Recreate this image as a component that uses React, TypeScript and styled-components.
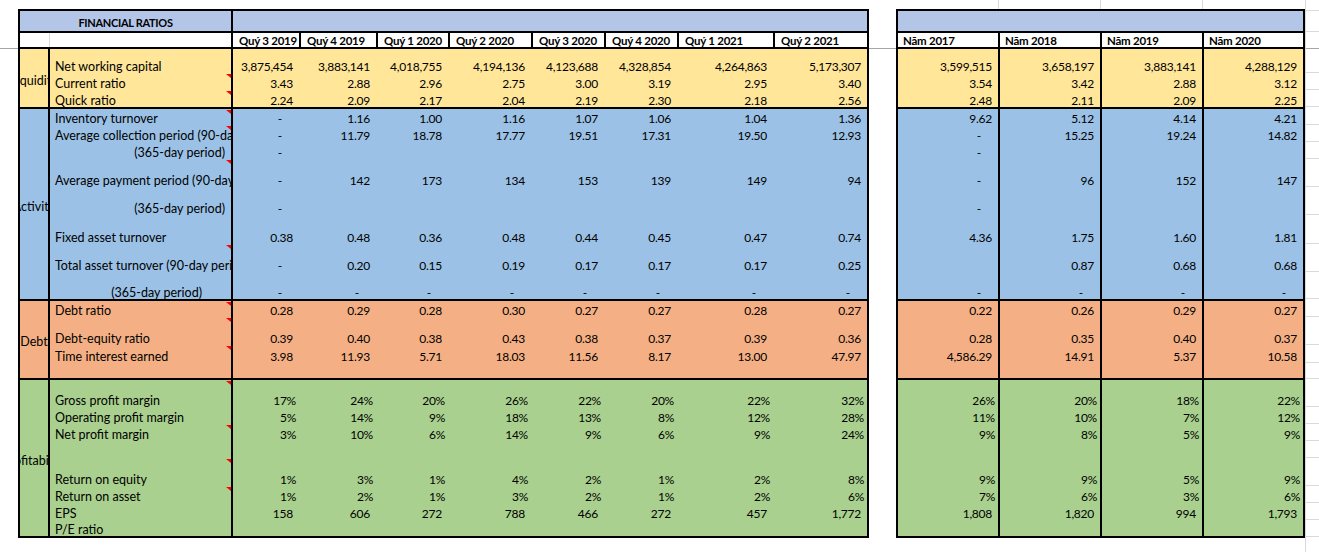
import React from 'react';
import styled, { createGlobalStyle } from 'styled-components';

const GlobalStyle = createGlobalStyle`
  html, body {
    margin: 0;
    padding: 0;
    background: #ffffff;
  }
  body {
    font-family: Lato, "Liberation Sans", sans-serif;
    font-size: 12.5px;
    color: #000000;
  }
`;

const INK = '#000000';
const GRID = '#d9d9d9';

// column widths (px), borders included
const CAT_W = 30;
const LABEL_W = 183;
const QUARTER_COLS = [66, 77, 72, 83, 73, 73, 96, 94];
const YEAR_COLS = [100, 102, 102, 101];

const px = (list: number[]) => list.map((w) => `${w}px`).join(' ');
const LEFT_COLS = px([CAT_W, LABEL_W, ...QUARTER_COLS]);
const RIGHT_COLS = px(YEAR_COLS);

// y of each sheet gridline seen in the right margin
const GRID_LINES = [10, 31, 72, 89, 106, 124, 141, 158, 186, 214, 243, 271, 298, 316, 344, 362, 378, 406, 423, 440, 457, 485, 502, 519, 536];

interface RatioRow {
  label: string;
  h: number;
  q: string[];
  y: string[];
  note?: boolean;
  sub?: number;
}

interface RatioGroup {
  name: string;
  bg: string;
  rows: RatioRow[];
}

const QUARTERS = ['Quý 3 2019', 'Quý 4 2019', 'Quý 1 2020', 'Quý 2 2020', 'Quý 3 2020', 'Quý 4 2020', 'Quý 1 2021', 'Quý 2 2021'];
const YEARS = ['Năm 2017', 'Năm 2018', 'Năm 2019', 'Năm 2020'];

const onlyFirst = (n: number) => ['-', ...Array(n - 1).fill('')];
const blanks = (n: number) => Array(n).fill('');
const dashes = (n: number) => Array(n).fill('-');

const groups: RatioGroup[] = [
  {
    name: 'Liquidity',
    bg: '#ffe699',
    rows: [
      { label: 'Net working capital', h: 24, q: ['3,875,454', '3,883,141', '4,018,755', '4,194,136', '4,123,688', '4,328,854', '4,264,863', '5,173,307'], y: ['3,599,515', '3,658,197', '3,883,141', '4,288,129'] },
      { label: 'Current ratio', h: 17, note: true, q: ['3.43', '2.88', '2.96', '2.75', '3.00', '3.19', '2.95', '3.40'], y: ['3.54', '3.42', '2.88', '3.12'] },
      { label: 'Quick ratio', h: 17, note: true, q: ['2.24', '2.09', '2.17', '2.04', '2.19', '2.30', '2.18', '2.56'], y: ['2.48', '2.11', '2.09', '2.25'] },
    ],
  },
  {
    name: 'Activity',
    bg: '#9bc2e6',
    rows: [
      { label: 'Inventory turnover', h: 16, note: true, q: ['-', '1.16', '1.00', '1.16', '1.07', '1.06', '1.04', '1.36'], y: ['9.62', '5.12', '4.14', '4.21'] },
      { label: 'Average collection period (90-day period)', h: 17, note: true, q: ['-', '11.79', '18.78', '17.77', '19.51', '17.31', '19.50', '12.93'], y: ['-', '15.25', '19.24', '14.82'] },
      { label: '(365-day period)', h: 17, sub: 6, q: onlyFirst(8), y: onlyFirst(4) },
      { label: 'Average payment period (90-day period)', h: 28, note: true, q: ['-', '142', '173', '134', '153', '139', '149', '94'], y: ['-', '96', '152', '147'] },
      { label: '(365-day period)', h: 28, sub: 6, q: onlyFirst(8), y: onlyFirst(4) },
      { label: 'Fixed asset turnover', h: 29, q: ['0.38', '0.48', '0.36', '0.48', '0.44', '0.45', '0.47', '0.74'], y: ['4.36', '1.75', '1.60', '1.81'] },
      { label: 'Total asset turnover (90-day period)', h: 28, note: true, q: ['-', '0.20', '0.15', '0.19', '0.17', '0.17', '0.17', '0.25'], y: ['', '0.87', '0.68', '0.68'] },
      { label: '(365-day period)', h: 27, sub: 29, q: dashes(8), y: dashes(4) },
    ],
  },
  {
    name: 'Debt',
    bg: '#f4b084',
    rows: [
      { label: 'Debt ratio', h: 16, note: true, q: ['0.28', '0.29', '0.28', '0.30', '0.27', '0.27', '0.28', '0.27'], y: ['0.22', '0.26', '0.29', '0.27'] },
      { label: 'Debt-equity ratio', h: 28, note: true, q: ['0.39', '0.40', '0.38', '0.43', '0.38', '0.37', '0.39', '0.36'], y: ['0.28', '0.35', '0.40', '0.37'] },
      { label: 'Time interest earned', h: 18, note: true, q: ['3.98', '11.93', '5.71', '18.03', '11.56', '8.17', '13.00', '47.97'], y: ['4,586.29', '14.91', '5.37', '10.58'] },
      { label: '', h: 15, q: blanks(8), y: blanks(4) },
    ],
  },
  {
    name: 'Profitability',
    bg: '#a9d08e',
    rows: [
      { label: 'Gross profit margin', h: 27, note: true, q: ['17%', '24%', '20%', '26%', '22%', '20%', '22%', '32%'], y: ['26%', '20%', '18%', '22%'] },
      { label: 'Operating profit margin', h: 17, q: ['5%', '14%', '9%', '18%', '13%', '8%', '12%', '28%'], y: ['11%', '10%', '7%', '12%'] },
      { label: 'Net profit margin', h: 17, note: true, q: ['3%', '10%', '6%', '14%', '9%', '6%', '9%', '24%'], y: ['9%', '8%', '5%', '9%'] },
      { label: '', h: 17, q: blanks(8), y: blanks(4) },
      { label: 'Return on equity', h: 28, note: true, q: ['1%', '3%', '1%', '4%', '2%', '1%', '2%', '8%'], y: ['9%', '9%', '5%', '9%'] },
      { label: 'Return on asset', h: 17, note: true, q: ['1%', '2%', '1%', '3%', '2%', '1%', '2%', '6%'], y: ['7%', '6%', '3%', '6%'] },
      { label: 'EPS', h: 17, q: ['158', '606', '272', '788', '466', '272', '457', '1,772'], y: ['1,808', '1,820', '994', '1,793'] },
      { label: 'P/E ratio', h: 16, q: blanks(8), y: blanks(4) },
    ],
  },
];

// right padding by accounting format: dash, percent or number
const padFor = (v: string) => (v === '-' ? 17 : v.endsWith('%') ? 3 : 6);

const Page = styled.div`
  display: flex;
  align-items: flex-start;
  width: 1319px;
  height: 552px;
  overflow: hidden;
  background: linear-gradient(#a6a6a6, #a6a6a6) 0 48px / 100% 1px no-repeat, #ffffff;
`;

const Gutter = styled.div<{ $w: number }>`
  flex: none;
  width: ${(p) => p.$w}px;
`;

const LeftWrap = styled.div`
  flex: none;
  padding-top: 9px;
`;

const RightWrap = styled.div`
  flex: none;
  display: flex;
  flex-direction: column;
`;

const TopStrip = styled.div`
  display: grid;
  grid-template-columns: 103px 102px 102px 1fr;
  height: 9px;
`;

const StripCell = styled.div<{ $rule: boolean }>`
  border-right: ${(p) => (p.$rule ? `1px solid ${GRID}` : 'none')};
`;

const RightMargin = styled.div`
  flex: 1;
  align-self: stretch;
  display: flex;
  flex-direction: column;
  border-left: 1px solid ${GRID};
`;

const MarginRow = styled.div<{ $h: number }>`
  box-sizing: border-box;
  flex: none;
  height: ${(p) => p.$h}px;
  border-bottom: 1px solid ${GRID};
`;

const Sheet = styled.div`
  display: flex;
  flex-direction: column;
  border: 2px solid ${INK};
  background: #ffffff;
`;

const TitleRow = styled.div<{ $cols: string }>`
  display: grid;
  grid-template-columns: ${(p) => p.$cols};
  height: 20px;
  border-bottom: 2px solid ${INK};
  background: #b4c6e7;
`;

const TitleCell = styled.div`
  grid-column: span 2;
  display: flex;
  align-items: flex-end;
  justify-content: center;
  border-right: 2px solid ${INK};
  font-size: 11px;
  font-weight: 700;
  letter-spacing: -0.3px;
  line-height: 12px;
  padding-bottom: 2px;
`;

const HeaderRow = styled.div<{ $cols: string }>`
  display: grid;
  grid-template-columns: ${(p) => p.$cols};
  height: 14px;
  background: #ffffff;
`;

const HeadCell = styled.div<{ $left: 'ink' | 'none'; $pad: number }>`
  box-sizing: border-box;
  display: flex;
  align-items: flex-end;
  min-width: 0;
  overflow: hidden;
  white-space: nowrap;
  padding-left: ${(p) => p.$pad}px;
  border-left: ${(p) => (p.$left === 'ink' ? `2px solid ${INK}` : 'none')};
  font-size: 11.5px;
  font-weight: 700;
  letter-spacing: -0.25px;
  line-height: 12px;
`;

const HeadSpacer = styled.div<{ $rule: 'ink' | 'grid' }>`
  box-sizing: border-box;
  border-right: ${(p) => (p.$rule === 'ink' ? `2px solid ${INK}` : `1px solid ${GRID}`)};
`;

const Section = styled.div<{ $cols: string; $rows: string; $bg: string }>`
  display: grid;
  grid-template-columns: ${(p) => p.$cols};
  grid-template-rows: ${(p) => p.$rows};
  border-top: 2px solid ${INK};
  background: ${(p) => p.$bg};
`;

const CatCell = styled.div`
  grid-column: 1;
  grid-row: 1 / -1;
  display: flex;
  align-items: center;
  justify-content: center;
  overflow: hidden;
  white-space: nowrap;
  border-right: 2px solid ${INK};
  padding-top: 4px;
`;

const LabelCell = styled.div<{ $note?: boolean; $sub?: number }>`
  position: relative;
  grid-column: 2;
  display: flex;
  align-items: flex-end;
  justify-content: ${(p) => (p.$sub !== undefined ? 'flex-end' : 'flex-start')};
  min-width: 0;
  overflow: hidden;
  white-space: nowrap;
  padding-left: 5px;
  padding-right: ${(p) => p.$sub ?? 0}px;
  border-right: 2px solid ${INK};
  line-height: 12px;

  &::after {
    content: '';
    display: ${(p) => (p.$note ? 'block' : 'none')};
    position: absolute;
    top: 1px;
    right: 0;
    border-top: 4px solid #ff0000;
    border-left: 5px solid transparent;
  }
`;

const ValueCell = styled.div<{ $pad: number; $sep?: boolean }>`
  box-sizing: border-box;
  display: flex;
  align-items: flex-end;
  justify-content: flex-end;
  min-width: 0;
  white-space: nowrap;
  padding-right: ${(p) => p.$pad}px;
  border-left: ${(p) => (p.$sep ? `2px solid ${INK}` : 'none')};
  font-size: 12px;
  letter-spacing: -0.25px;
  line-height: 12px;
`;

const rowTemplate = (g: RatioGroup) => g.rows.map((r) => `${r.h}px`).join(' ');

const QuarterSheet: React.FC = () => (
  <Sheet>
    <TitleRow $cols={LEFT_COLS}>
      <TitleCell>FINANCIAL RATIOS</TitleCell>
    </TitleRow>
    <HeaderRow $cols={LEFT_COLS}>
      <HeadSpacer $rule="grid" />
      <HeadSpacer $rule="ink" />
      {QUARTERS.map((q, i) => (
        <HeadCell key={q} $left={i === 0 ? 'none' : 'ink'} $pad={6}>
          {q}
        </HeadCell>
      ))}
    </HeaderRow>
    {groups.map((g) => (
      <Section key={g.name} $cols={LEFT_COLS} $rows={rowTemplate(g)} $bg={g.bg}>
        <CatCell>{g.name}</CatCell>
        {g.rows.map((r, ri) => (
          <React.Fragment key={ri}>
            <LabelCell $note={r.note} $sub={r.sub} style={{ gridRow: ri + 1 }}>
              {r.label}
            </LabelCell>
            {r.q.map((v, ci) => (
              <ValueCell key={ci} $pad={padFor(v)} style={{ gridRow: ri + 1 }}>
                {v}
              </ValueCell>
            ))}
          </React.Fragment>
        ))}
      </Section>
    ))}
  </Sheet>
);

const YearSheet: React.FC = () => (
  <Sheet>
    <TitleRow $cols={RIGHT_COLS} />
    <HeaderRow $cols={RIGHT_COLS}>
      {YEARS.map((y, i) => (
        <HeadCell key={y} $left={i === 0 ? 'none' : 'ink'} $pad={5}>
          {y}
        </HeadCell>
      ))}
    </HeaderRow>
    {groups.map((g) => (
      <Section key={g.name} $cols={RIGHT_COLS} $rows={rowTemplate(g)} $bg={g.bg}>
        {g.rows.map((r, ri) =>
          r.y.map((v, ci) => (
            <ValueCell key={`${ri}-${ci}`} $pad={padFor(v)} $sep={ci > 0}>
              {v}
            </ValueCell>
          )),
        )}
      </Section>
    ))}
  </Sheet>
);

const App: React.FC = () => {
  const marginRows = GRID_LINES.map((y, i) => (i === 0 ? y + 1 : y - GRID_LINES[i - 1]));

  return (
    <>
      <GlobalStyle />
      <Page>
        <Gutter $w={18} />
        <LeftWrap>
          <QuarterSheet />
        </LeftWrap>
        <Gutter $w={27} />
        <RightWrap>
          <TopStrip>
            <StripCell $rule />
            <StripCell $rule />
            <StripCell $rule />
            <StripCell $rule={false} />
          </TopStrip>
          <YearSheet />
        </RightWrap>
        <RightMargin>
          {marginRows.map((h, i) => (
            <MarginRow key={i} $h={h} />
          ))}
        </RightMargin>
      </Page>
    </>
  );
};

export default App;
